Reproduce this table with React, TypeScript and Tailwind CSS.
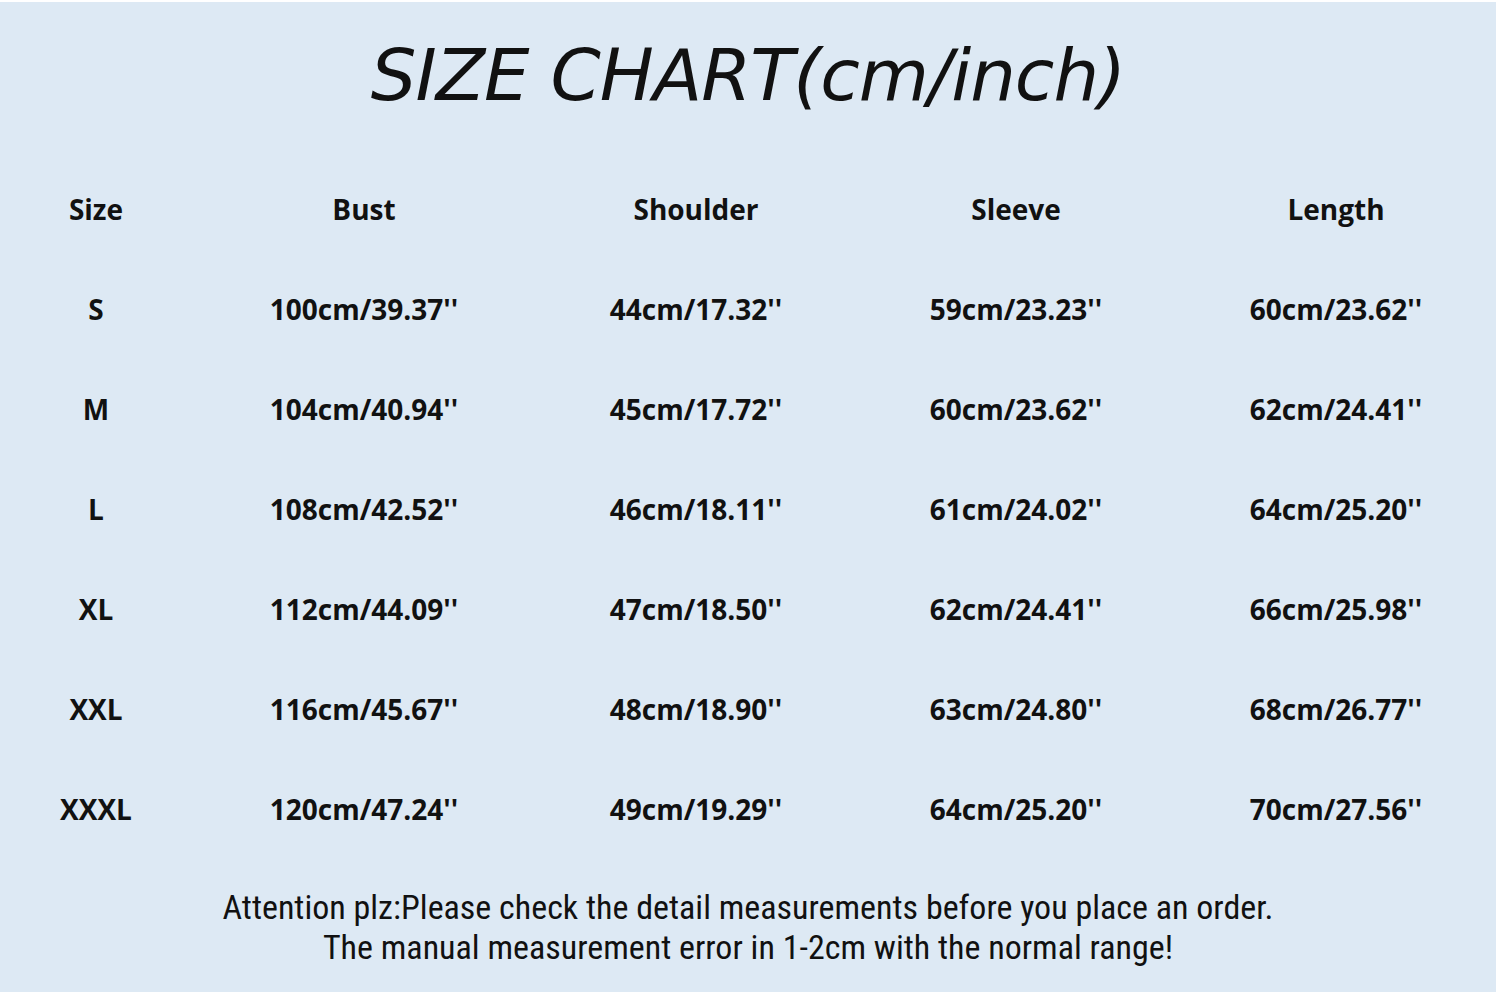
import React from "react"

type Row = {
  size: string
  bust: string
  shoulder: string
  sleeve: string
  length: string
}

const rows: Row[] = [
  { size: "S", bust: "100cm/39.37''", shoulder: "44cm/17.32''", sleeve: "59cm/23.23''", length: "60cm/23.62''" },
  { size: "M", bust: "104cm/40.94''", shoulder: "45cm/17.72''", sleeve: "60cm/23.62''", length: "62cm/24.41''" },
  { size: "L", bust: "108cm/42.52''", shoulder: "46cm/18.11''", sleeve: "61cm/24.02''", length: "64cm/25.20''" },
  { size: "XL", bust: "112cm/44.09''", shoulder: "47cm/18.50''", sleeve: "62cm/24.41''", length: "66cm/25.98''" },
  { size: "XXL", bust: "116cm/45.67''", shoulder: "48cm/18.90''", sleeve: "63cm/24.80''", length: "68cm/26.77''" },
  { size: "XXXL", bust: "120cm/47.24''", shoulder: "49cm/19.29''", sleeve: "64cm/25.20''", length: "70cm/27.56''" },
]

const cols = "grid grid-cols-[192px_344px_320px_320px_320px] h-[100px] items-center text-center"

function Cells({ items }: { items: string[] }) {
  return (
    <div className={cols}>
      {items.map((t, i) => (
        <div key={i}>{t}</div>
      ))}
    </div>
  )
}

export default function App() {
  return (
    <div className="w-[1500px] h-[996px] bg-white pt-[2px]">
      <div className="w-[1496px] h-[990px] bg-[#dde9f4] flex flex-col">
        <h1 className="pt-[28px] h-[157px] text-center text-[72px] leading-[90px] text-[#111] italic font-normal font-['DejaVu_Sans',sans-serif] tracking-[-1px]">
          SIZE CHART(cm/inch)
        </h1>

        <div className="font-['Open_Sans','DejaVu_Sans',sans-serif] font-bold text-[28px] text-[#111]">
          <Cells items={["Size", "Bust", "Shoulder", "Sleeve", "Length"]} />
          {rows.map((r) => (
            <Cells key={r.size} items={[r.size, r.bust, r.shoulder, r.sleeve, r.length]} />
          ))}
        </div>

        <div className="pt-[28px] text-center text-[34px] leading-[40px] text-[#111] font-['Liberation_Sans_Narrow','Roboto_Condensed','Liberation_Sans',sans-serif]">
          <p>Attention plz:Please check the detail measurements before you place an order.</p>
          <p>The manual measurement error in 1-2cm with the normal range!</p>
        </div>
      </div>
    </div>
  )
}
